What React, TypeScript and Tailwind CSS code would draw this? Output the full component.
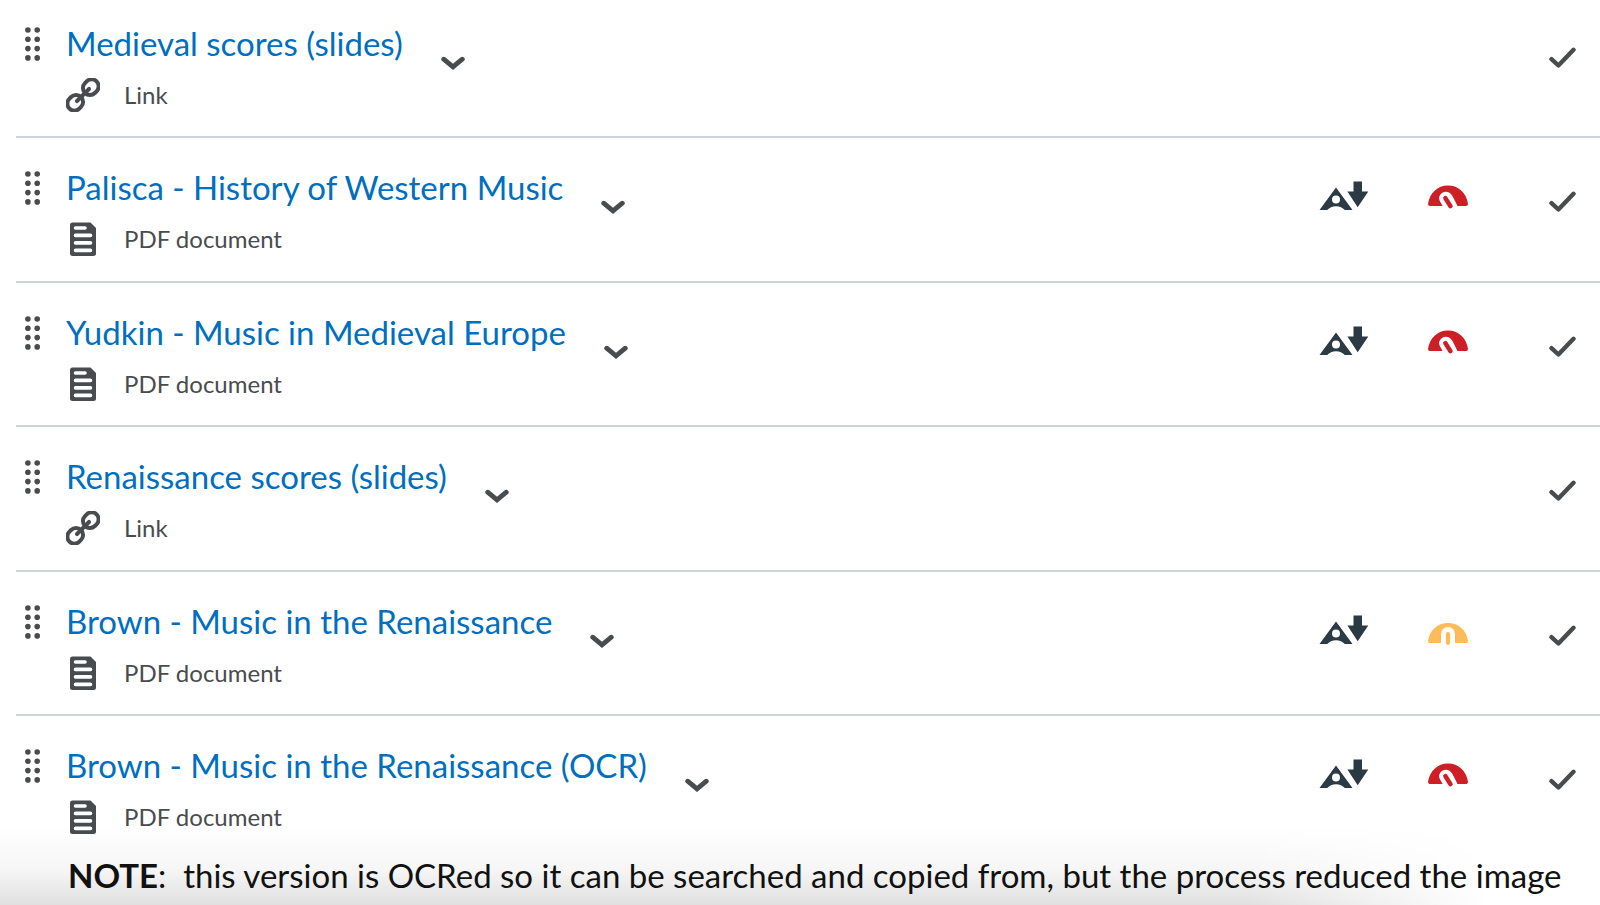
type Level = "low" | "medium";

interface Topic {
  title: string;
  kind: "link" | "pdf";
  level?: Level;
}

const topics: Topic[] = [
  { title: "Medieval scores (slides)", kind: "link" },
  { title: "Palisca - History of Western Music", kind: "pdf", level: "low" },
  { title: "Yudkin - Music in Medieval Europe", kind: "pdf", level: "low" },
  { title: "Renaissance scores (slides)", kind: "link" },
  { title: "Brown - Music in the Renaissance", kind: "pdf", level: "medium" },
  { title: "Brown - Music in the Renaissance (OCR)", kind: "pdf", level: "low" },
];

function DragDots() {
  return (
    <svg viewBox="0 0 16 36" className="h-9 w-4 fill-[#494c4e]" aria-hidden="true">
      {[4, 13.3, 22.6, 31.9].map((y) => (
        <g key={y}>
          <circle cx="3.9" cy={y} r="2.8" />
          <circle cx="13.2" cy={y} r="2.8" />
        </g>
      ))}
    </svg>
  );
}

function LinkIcon() {
  return (
    <svg viewBox="0 0 34 34" className="size-[34px] fill-none stroke-[#494c4e]" aria-hidden="true">
      <g transform="rotate(-45 17 17)" strokeWidth="4" strokeLinecap="round">
        <rect x="-2.2" y="10" width="16.4" height="14" rx="7" />
        <rect x="19.8" y="10" width="16.4" height="14" rx="7" />
        <path d="M8.500 17H25.500" />
      </g>
    </svg>
  );
}

function DocIcon() {
  return (
    <svg viewBox="0 0 34 34" className="size-[34px]" aria-hidden="true">
      <path d="M6.500 0.500H24.500L30 6V31.500Q30 34 27.500 34H6.500Q4 34 4 31.500V3Q4 .5 6.500 .5Z" fill="#494c4e" />
      <g stroke="#fff" strokeWidth="3.6" strokeLinecap="round">
        <path d="M9.500 6H19M9.500 13.400H24.500M9.500 20.900H24.500M9.500 28.400H24.500" />
      </g>
    </svg>
  );
}

function ChevronIcon() {
  return (
    <svg viewBox="0 0 24 14" className="h-[14px] w-6 fill-none stroke-[#494c4e]" aria-hidden="true">
      <path d="M2.700 3.200L12 10.900L21.300 3.200" strokeWidth="4.800" strokeLinecap="round" />
    </svg>
  );
}

function CheckIcon() {
  return (
    <svg viewBox="0 0 28 22" className="h-[22px] w-7 fill-none stroke-[#494c4e]" aria-hidden="true">
      <path d="M3.500 12.200L10.400 18.500L25.500 2.800" strokeWidth="4.400" strokeLinecap="round" strokeLinejoin="round" />
    </svg>
  );
}

function FormatsIcon() {
  return (
    <svg viewBox="0 0 50 30" className="h-[30px] w-[50px] fill-[#2c3a44]" aria-hidden="true">
      <path
        fillRule="evenodd"
        d="M17 6.500L33.500 29H25.800Q22.500 25.200 17 25.200T8.200 29H.5ZM17 14.400a4 4 0 1 0 0 8a4 4 0 1 0 0-8Z"
      />
      <path d="M34.500 .5H43V10.500H49.300L38.700 26.300L28.400 10.500H34.500Z" />
    </svg>
  );
}

function GaugeIcon({ level }: { level: Level }) {
  if (level === "medium") {
    return (
      <svg viewBox="0 0 40 30" className="h-[30px] w-10" aria-hidden="true">
        <path
          d="M2 28Q0 28 0 26C1.500 15 9.500 8 20 8S38.500 15 40 26Q40 28 38 28H27V19a7 7 0 0 0-14 0V28Z"
          fill="#ffba59"
        />
        <path d="M20 19.200V27.800" stroke="#ffba59" strokeWidth="4.200" strokeLinecap="round" />
      </svg>
    );
  }
  return (
    <svg viewBox="0 0 40 30" className="h-[30px] w-10" aria-hidden="true">
      <path
        d="M2 25Q0 25 0 23C1.500 12 9.500 4.500 20 4.500S38.500 12 40 23Q40 25 38 25H29.500L24.300 14.800C21.600 10.300 17.200 10 14 12.100C10.800 14.500 10.500 17.500 12.200 20.700L14.600 25Z"
        fill="#ce1f26"
      />
      <path d="M17.300 17L22.500 25.200" stroke="#ce1f26" strokeWidth="4.400" strokeLinecap="round" />
    </svg>
  );
}

function TopicRow({ topic }: { topic: Topic }) {
  return (
    <li className="flex items-start border-b-2 border-[#cdd5dc] pt-[30px] pl-2 pr-6 first:pt-6 last:border-b-0 not-last:odd:pb-[23px] not-last:even:pb-6">
      <button type="button" aria-label={`Move ${topic.title}`} className="mt-[2px] mr-[26px] shrink-0 cursor-move">
        <DragDots />
      </button>
      <div className="min-w-0 flex-1">
        <div className="flex items-start gap-[38px]">
          <a href="#" className="text-[33px] leading-[38px] text-[#006fbf]">
            {topic.title}
          </a>
          <button type="button" aria-label={`Actions for ${topic.title}`} className="mt-8 shrink-0">
            <ChevronIcon />
          </button>
        </div>
        <div className="mt-[7px] flex items-center gap-6 text-[24px] leading-9 text-[#494c4e]">
          {topic.kind === "link" ? <LinkIcon /> : <DocIcon />}
          <span>{topic.kind === "link" ? "Link" : "PDF document"}</span>
        </div>
      </div>
      <div className="flex shrink-0 items-start">
        {topic.level && (
          <div className="mt-[13px] mr-20 flex gap-[59px]">
            <button type="button" aria-label="Alternative formats">
              <FormatsIcon />
            </button>
            <button type="button" aria-label={`Accessibility score: ${topic.level}`}>
              <GaugeIcon level={topic.level} />
            </button>
          </div>
        )}
        <span role="img" aria-label="Completed" className="mt-[23px]">
          <CheckIcon />
        </span>
      </div>
    </li>
  );
}

export default function App() {
  return (
    <main className="relative h-screen overflow-hidden bg-white font-['Lato',sans-serif]">
      <div className="pointer-events-none absolute inset-x-0 bottom-0 h-20 bg-linear-to-t from-[#e0e0e0] via-[#f6f6f6] via-45% to-white [mask-image:linear-gradient(to_right,black_78%,transparent_93%)]" />
      <div className="relative">
        <ul className="pl-4">
          {topics.map((topic) => (
            <TopicRow key={topic.title} topic={topic} />
          ))}
        </ul>
        <p className="mt-5 pl-[68px] text-[33px] leading-10 whitespace-nowrap text-[#111]">
          <strong className="font-bold">NOTE</strong>:&nbsp; this version is OCRed so it can be searched and copied from,
          but the process reduced the image
        </p>
      </div>
    </main>
  );
}
